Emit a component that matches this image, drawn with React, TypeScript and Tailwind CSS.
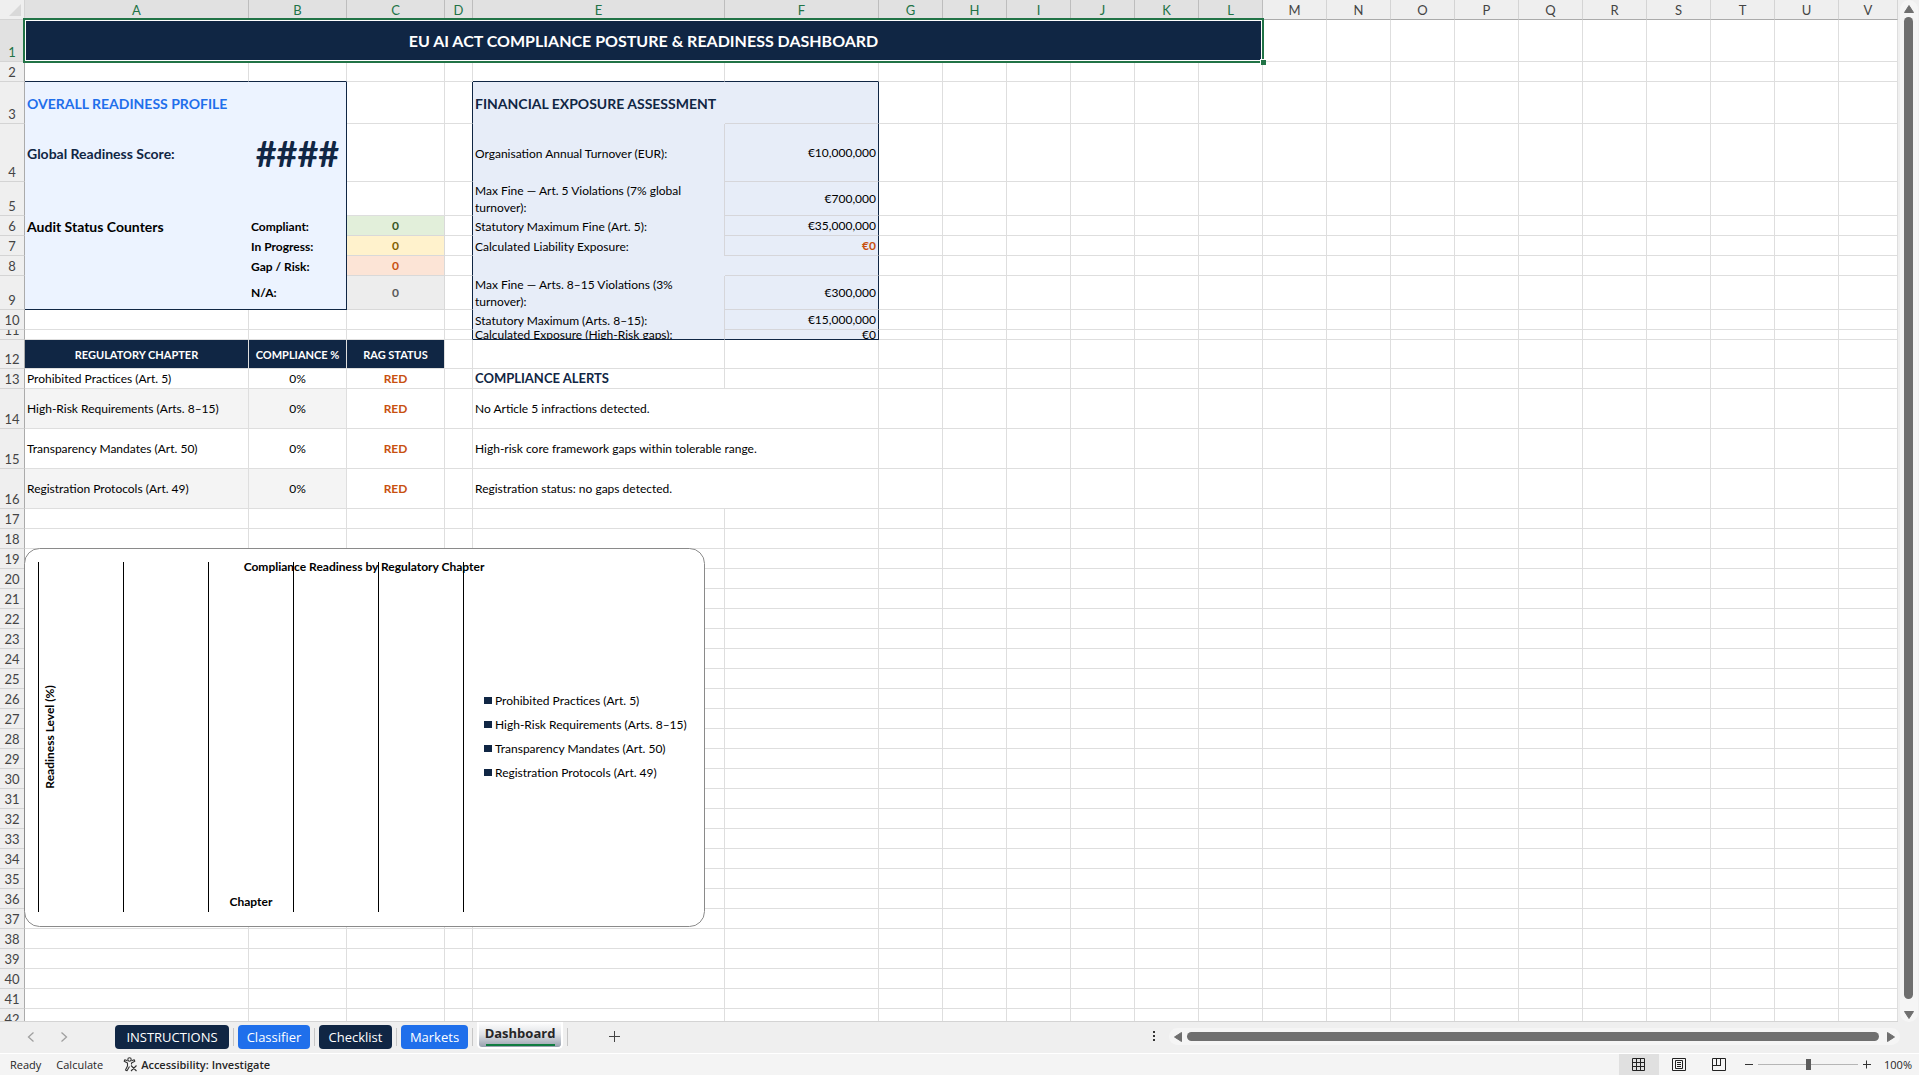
import React from "react";

type Cell = { text?: string; cls?: string; span?: number };
type Row = { h: string; cells: Record<string, Cell> };

const LETTERS = "ABCDEFGHIJKLMNOPQRSTUV".split("");
const LINE = "border-[#dedede]";
const PLAIN = `border-r border-b ${LINE}`;

const H10 = "h-[10px]";
const H20 = "h-[20px]";
const H29 = "h-[29px]";
const H34 = "h-[34px]";
const H40 = "h-[40px]";
const H42 = "h-[42px]";
const H58 = "h-[58px]";

const P1 = "bg-[#ecf3ff]";
const P2 = "bg-[#e7edf8] border-[#d6d6da]";
const P2L = "bg-[#e7edf8] border-r border-[#d6d6da]";
const P2V = "bg-[#e7edf8] border-b border-b-[#d6d6da] border-r border-r-[#102644] text-right";
const HEAD = "bg-[#102644] text-white text-[11px] font-bold text-center border-r border-b border-[#dedede]";
const COUNT = "text-center font-bold text-[12px] border-r border-b border-[#d9d9d9]";
const PANEL_RIGHT = "bg-[#ecf3ff] border-r border-r-[#102644]";
const RED = `text-center font-bold text-[#c8500f] ${PLAIN}`;
const ALT = `bg-[#f4f4f4] ${PLAIN}`;
const BEFORE_PANEL = "border-b border-b-[#dedede] border-r border-r-[#102644]";
const ABOVE_PANEL = "border-r border-r-[#dedede] border-b border-b-[#102644]";

const ROWS: Row[] = [
  {
    h: H42,
    cells: {
      A: {
        text: "EU AI ACT COMPLIANCE POSTURE & READINESS DASHBOARD",
        span: 12,
        cls: "bg-[#102644] text-white font-bold text-[16px] text-center border-r border-b border-[#217346]",
      },
    },
  },
  {
    h: H20,
    cells: {
      A: { cls: ABOVE_PANEL },
      B: { cls: ABOVE_PANEL },
      E: { cls: ABOVE_PANEL },
      F: { cls: ABOVE_PANEL },
    },
  },
  {
    h: H42,
    cells: {
      A: { text: "OVERALL READINESS PROFILE", span: 2, cls: `${PANEL_RIGHT} font-bold text-[14px] text-[#1f6feb]` },
      D: { cls: BEFORE_PANEL },
      E: { text: "FINANCIAL EXPOSURE ASSESSMENT", cls: `${P2} font-bold text-[14px] text-[#102644] whitespace-nowrap` },
      F: { cls: P2V },
    },
  },
  {
    h: H58,
    cells: {
      A: { text: "Global Readiness Score:", cls: `${P1} font-bold text-[14px] text-[#102644]` },
      B: { text: "####", cls: `${PANEL_RIGHT} font-bold text-[36px] text-[#102644] text-center` },
      D: { cls: BEFORE_PANEL },
      E: { text: "Organisation Annual Turnover (EUR):", cls: P2L },
      F: { text: "€10,000,000", cls: P2V },
    },
  },
  {
    h: H34,
    cells: {
      A: { cls: P1 },
      B: { cls: PANEL_RIGHT },
      D: { cls: BEFORE_PANEL },
      E: { text: "Max Fine — Art. 5 Violations (7% global turnover):", cls: P2L },
      F: { text: "€700,000", cls: P2V },
    },
  },
  {
    h: H20,
    cells: {
      A: { text: "Audit Status Counters", cls: `${P1} font-bold text-[14px]` },
      B: { text: "Compliant:", cls: `${PANEL_RIGHT} font-bold` },
      C: { text: "0", cls: `${COUNT} bg-[#e2efda] text-[#375623]` },
      D: { cls: BEFORE_PANEL },
      E: { text: "Statutory Maximum Fine (Art. 5):", cls: P2L },
      F: { text: "€35,000,000", cls: P2V },
    },
  },
  {
    h: H20,
    cells: {
      A: { cls: P1 },
      B: { text: "In Progress:", cls: `${PANEL_RIGHT} font-bold` },
      C: { text: "0", cls: `${COUNT} bg-[#fff2cc] text-[#7f6000]` },
      D: { cls: BEFORE_PANEL },
      E: { text: "Calculated Liability Exposure:", cls: P2L },
      F: { text: "€0", cls: `${P2V} font-bold text-[#c8500f]` },
    },
  },
  {
    h: H20,
    cells: {
      A: { cls: P1 },
      B: { text: "Gap / Risk:", cls: `${PANEL_RIGHT} font-bold` },
      C: { text: "0", cls: `${COUNT} bg-[#fce4d6] text-[#c8500f]` },
      D: { cls: BEFORE_PANEL },
      E: { cls: P2 },
      F: { cls: P2V },
    },
  },
  {
    h: H34,
    cells: {
      A: { cls: `${P1} border-b border-b-[#102644]` },
      B: { text: "N/A:", cls: `${PANEL_RIGHT} font-bold border-b border-b-[#102644]` },
      C: { text: "0", cls: `${COUNT} bg-[#ededed] text-[#595959]` },
      D: { cls: BEFORE_PANEL },
      E: { text: "Max Fine — Arts. 8–15 Violations (3% turnover):", cls: P2L },
      F: { text: "€300,000", cls: P2V },
    },
  },
  {
    h: H20,
    cells: {
      D: { cls: BEFORE_PANEL },
      E: { text: "Statutory Maximum (Arts. 8–15):", cls: P2L },
      F: { text: "€15,000,000", cls: P2V },
    },
  },
  {
    h: H10,
    cells: {
      D: { cls: BEFORE_PANEL },
      E: {
        text: "Calculated Exposure (High-Risk gaps):",
        cls: "bg-[#e7edf8] border-r border-r-[#d6d6da] border-b border-b-[#102644]",
      },
      F: { text: "€0", cls: "bg-[#e7edf8] text-right border-r border-b border-[#102644]" },
    },
  },
  {
    h: H29,
    cells: {
      A: { text: "REGULATORY CHAPTER", cls: HEAD },
      B: { text: "COMPLIANCE %", cls: HEAD },
      C: { text: "RAG STATUS", cls: HEAD },
    },
  },
  {
    h: H20,
    cells: {
      A: { text: "Prohibited Practices (Art. 5)" },
      B: { text: "0%", cls: `text-center ${PLAIN}` },
      C: { text: "RED", cls: RED },
      E: { text: "COMPLIANCE ALERTS", cls: `font-bold text-[13px] text-[#102644] ${PLAIN}` },
    },
  },
  {
    h: H40,
    cells: {
      A: { text: "High-Risk Requirements (Arts. 8–15)", cls: ALT },
      B: { text: "0%", cls: `text-center ${ALT}` },
      C: { text: "RED", cls: RED },
      E: { text: "No Article 5 infractions detected.", span: 2 },
    },
  },
  {
    h: H40,
    cells: {
      A: { text: "Transparency Mandates (Art. 50)" },
      B: { text: "0%", cls: `text-center ${PLAIN}` },
      C: { text: "RED", cls: RED },
      E: { text: "High-risk core framework gaps within tolerable range.", span: 2 },
    },
  },
  {
    h: H40,
    cells: {
      A: { text: "Registration Protocols (Art. 49)", cls: ALT },
      B: { text: "0%", cls: `text-center ${ALT}` },
      C: { text: "RED", cls: RED },
      E: { text: "Registration status: no gaps detected.", span: 2 },
    },
  },
  ...Array.from({ length: 26 }, () => ({ h: H20, cells: {} })),
];

function SheetRow({ row, n }: { row: Row; n: number }) {
  const out: React.ReactNode[] = [];
  for (let i = 0; i < LETTERS.length; ) {
    const c = row.cells[LETTERS[i]] ?? {};
    const span = c.span ?? 1;
    const small = row.h === H10;
    out.push(
      <td key={i} colSpan={span} className={`p-0 align-middle ${c.cls ?? PLAIN}`}>
        {c.text && (
          <div className={small ? "flex h-[9px] flex-col overflow-hidden px-[2px]" : "px-[2px]"}>
            {small ? <span className="-mt-1 whitespace-nowrap">{c.text}</span> : c.text}
          </div>
        )}
      </td>
    );
    i += span;
  }
  const active = n === 1;
  return (
    <tr className={row.h}>
      <th
        scope="row"
        className={`border-r border-b border-r-[#ababab] border-b-[#d4d4d4] p-0 align-bottom text-[13px] leading-[18px] font-normal ${
          active ? "bg-[#e1e1e1] text-[#217346]" : "bg-[#efefef] text-[#444444]"
        }`}
      >
        {row.h === H10 ? (
          <div className="flex h-[9px] flex-col justify-end overflow-hidden">
            <span>{n}</span>
          </div>
        ) : (
          n
        )}
      </th>
      {out}
    </tr>
  );
}

const LEGEND = [
  "Prohibited Practices (Art. 5)",
  "High-Risk Requirements (Arts. 8–15)",
  "Transparency Mandates (Art. 50)",
  "Registration Protocols (Art. 49)",
];

function Chart() {
  return (
    <svg
      className="absolute top-[548px] left-6"
      width="681"
      height="379"
      viewBox="0 0 681 379"
      role="img"
      aria-label="Compliance Readiness by Regulatory Chapter"
    >
      <rect x="0.5" y="0.5" width="680" height="378" rx="15" fill="#fff" stroke="#8a8a8a" />
      <g fontSize="12" fill="#000">
        <text x="340" y="23" textAnchor="middle" fontWeight="700">
          Compliance Readiness by Regulatory Chapter
        </text>
        <text x="227" y="358" textAnchor="middle" fontWeight="700">
          Chapter
        </text>
        <text transform="translate(30 189) rotate(-90)" textAnchor="middle" fontWeight="700">
          Readiness Level (%)
        </text>
        {LEGEND.map((t, i) => (
          <g key={t}>
            <rect x="460" y={149 + i * 24} width="8" height="7" fill="#102644" />
            <text x="471" y={157 + i * 24}>
              {t}
            </text>
          </g>
        ))}
      </g>
      {[0, 1, 2, 3, 4, 5].map((i) => (
        <rect key={i} x={14 + i * 85} y="14" width="1" height="350" fill="#000" />
      ))}
    </svg>
  );
}

function Sheet() {
  return (
    <div className="relative min-w-0 flex-1 overflow-hidden border-b border-[#d4d4d4] bg-white font-['Lato',sans-serif] text-[12px] leading-[17px] text-black">
      <table className="w-full table-fixed border-separate border-spacing-0">
        <colgroup>
          <col className="w-[25px]" />
          <col className="w-[224px]" />
          <col className="w-[98px]" />
          <col className="w-[98px]" />
          <col className="w-[28px]" />
          <col className="w-[252px]" />
          <col className="w-[154px]" />
          {LETTERS.slice(6, 21).map((l) => (
            <col key={l} className="w-[64px]" />
          ))}
          <col />
        </colgroup>
        <thead>
          <tr className="h-[20px]">
            <th className="border-r border-b border-[#d4d4d4] bg-[#efefef] p-0">
              <svg className="ml-2 block" width="14" height="12" aria-hidden="true">
                <path d="M13 0V12H1Z" fill="#d9d9d9" />
              </svg>
            </th>
            {LETTERS.map((l, i) => (
              <th
                key={l}
                scope="col"
                className={`border-r border-b p-0 pt-px text-[13px] leading-[18px] font-normal ${
                  i < 12
                    ? "border-r-[#bdbdbd] border-b-[#217346] bg-[#e1e1e1] text-[#217346]"
                    : "border-r-[#d4d4d4] border-b-[#ababab] bg-[#efefef] text-[#444444]"
                }`}
              >
                {l}
              </th>
            ))}
          </tr>
        </thead>
        <tbody>
          {ROWS.map((r, i) => (
            <SheetRow key={i} row={r} n={i + 1} />
          ))}
        </tbody>
      </table>
      <div className="pointer-events-none absolute top-[18px] left-[23px] h-[45px] w-[1241px] border-2 border-[#217346]">
        <div className="h-full border border-white" />
        <div className="absolute -right-[4px] -bottom-[4px] h-[6px] w-[6px] border-t border-l border-white bg-[#217346]" />
      </div>
      <Chart />
    </div>
  );
}

function VerticalScroll() {
  return (
    <div className="flex w-[21px] shrink-0 justify-center">
      <div className="flex w-[18px] flex-col items-center rounded-full bg-[#f5f5f5] pt-[5px] pb-[3px]">
        <svg width="10" height="8" aria-hidden="true">
          <path d="M5 0.5L9.5 7.5H0.5Z" fill="#6f6f6f" stroke="#6f6f6f" strokeLinejoin="round" />
        </svg>
        <div className="mt-1 mb-3 w-[9px] flex-1 rounded-full bg-[#6f6f6f]" />
        <svg width="10" height="8" aria-hidden="true">
          <path d="M5 7.5L9.5 0.5H0.5Z" fill="#6f6f6f" stroke="#6f6f6f" strokeLinejoin="round" />
        </svg>
      </div>
    </div>
  );
}

const TABS = [
  { name: "INSTRUCTIONS", cls: "bg-[#102644] w-[114px]" },
  { name: "Classifier", cls: "bg-[#1f6feb] w-[72px]" },
  { name: "Checklist", cls: "bg-[#102644] w-[73px]" },
  { name: "Markets", cls: "bg-[#1f6feb] w-[67px]" },
];

function TabBar() {
  return (
    <div className="flex h-[31px] shrink-0 items-center bg-[#efefef] pb-[2px]">
      <div className="flex w-[115px] items-center gap-[25px] pl-[27px] text-[#a0a0a0]">
        <button aria-label="Previous sheet">
          <svg width="8" height="12" fill="none" stroke="currentColor" strokeWidth="1.3" aria-hidden="true">
            <path d="M6.5 1.5L1.5 6L6.5 10.5" />
          </svg>
        </button>
        <button aria-label="Next sheet">
          <svg width="8" height="12" fill="none" stroke="currentColor" strokeWidth="1.3" aria-hidden="true">
            <path d="M1.5 1.5L6.5 6L1.5 10.5" />
          </svg>
        </button>
      </div>
      {TABS.map((t) => (
        <React.Fragment key={t.name}>
          <button className={`h-6 rounded-[4px] text-center font-['Open_Sans',sans-serif] text-[13px] leading-6 text-white ${t.cls}`}>
            {t.name}
          </button>
          <span className="mx-1 h-[18px] w-px bg-[#c6c6c6]" />
        </React.Fragment>
      ))}
      <button className="flex h-[27px] w-[86px] flex-col items-center self-start rounded-b-[5px] border-x-2 border-b-2 border-white bg-linear-to-b from-white via-[#dfe1e5] to-[#97a0ae] pt-px font-['Open_Sans',sans-serif] text-[13px] leading-[21px] font-bold text-[#262626]">
        Dashboard
        <span className="h-[2px] w-[69px] bg-[#107c41]" />
      </button>
      <span className="mx-1 h-[18px] w-px bg-[#c6c6c6]" />
      <button aria-label="New sheet" className="ml-9">
        <svg width="13" height="13" stroke="#444" aria-hidden="true">
          <path d="M6.5 1V12M1 6.5H12" />
        </svg>
      </button>
      <div className="ml-auto flex w-[766px] items-center">
        <svg width="3" height="11" fill="#333" aria-hidden="true">
          <path d="M0 0h2v2H0zM0 4h2v2H0zM0 8h2v2H0z" />
        </svg>
        <div className="ml-[13px] mr-[19px] flex h-[17px] flex-1 items-center rounded-full bg-[#f5f5f5] px-[5px]">
          <svg width="8" height="10" aria-hidden="true">
            <path d="M0.5 5L7.5 0.5V9.5Z" fill="#6f6f6f" stroke="#6f6f6f" strokeLinejoin="round" />
          </svg>
          <div className="mr-2 ml-[5px] h-[9px] flex-1 rounded-full bg-[#6f6f6f]" />
          <svg width="8" height="10" aria-hidden="true">
            <path d="M7.5 5L0.5 0.5V9.5Z" fill="#6f6f6f" stroke="#6f6f6f" strokeLinejoin="round" />
          </svg>
        </div>
      </div>
    </div>
  );
}

function StatusBar() {
  return (
    <div className="flex h-[22px] shrink-0 items-center border-t border-white bg-[#f4f4f4] pl-[10px] font-['Open_Sans',sans-serif] text-[11px] leading-[21px] text-[#262626]">
      <span>Ready</span>
      <span className="ml-[15px]">Calculate</span>
      <button className="ml-5 flex items-center gap-[3px] font-semibold">
        <svg width="15" height="15" viewBox="0 0 15 15" fill="none" stroke="#333" strokeWidth="1.1" strokeLinejoin="round" aria-hidden="true">
          <circle cx="6.5" cy="2.5" r="1.7" />
          <path d="M4.500 3.800L1.800 2.800L1.200 4.300L4.500 5.900V9L2.500 13L4 13.700L6.500 9.500M8.500 3.800L11.200 2.800L11.800 4.300L8.500 5.900V7.500M8 8.500L13.500 14M13.500 8.500L8 14" />
        </svg>
        Accessibility: Investigate
      </button>
      <div className="ml-auto flex items-center">
        <button aria-label="Normal view" className="flex h-[21px] w-10 items-center justify-center bg-[#e0e0e0]">
          <svg width="14" height="14" fill="none" stroke="#222" aria-hidden="true">
            <path d="M.5 .5h12v12H.5zM4.5 .5v12M8.5 .5v12M.5 4.5h12M.5 8.5h12" />
          </svg>
        </button>
        <button aria-label="Page layout" className="flex h-[21px] w-10 items-center justify-center">
          <svg width="14" height="14" fill="none" stroke="#222" aria-hidden="true">
            <path d="M.5 .5h13v12H.5zM3.5 2.5h7v8h-7zM5 4.5h4M5 6.500h4M5 8.5h4" />
          </svg>
        </button>
        <button aria-label="Page break preview" className="flex h-[21px] w-10 items-center justify-center">
          <svg width="14" height="14" fill="none" stroke="#222" aria-hidden="true">
            <path d="M.5 .5h13v12H.5zM.5 7.5h8M8.5 8V.5M4.5 7.5V.5" />
          </svg>
        </button>
        <button aria-label="Zoom out" className="ml-[5px]">
          <svg width="10" height="10" stroke="#333" aria-hidden="true">
            <path d="M1 4.5H9" />
          </svg>
        </button>
        <input
          type="range"
          aria-label="Zoom"
          min={0}
          max={100}
          defaultValue={50}
          className="mx-1 h-[12px] w-[100px] appearance-none bg-linear-to-b from-transparent from-[5px] via-[#777] via-[5px] to-transparent to-[6px] [&::-webkit-slider-thumb]:h-[11px] [&::-webkit-slider-thumb]:w-[5px] [&::-webkit-slider-thumb]:appearance-none [&::-webkit-slider-thumb]:bg-[#5c5c5c]"
        />
        <button aria-label="Zoom in">
          <svg width="10" height="10" stroke="#333" aria-hidden="true">
            <path d="M1 4.5H9M4.5 .5V8.5" />
          </svg>
        </button>
        <button className="w-[47px] pr-[7px] text-right">100%</button>
      </div>
    </div>
  );
}

export default function App() {
  return (
    <div className="flex h-screen flex-col overflow-hidden bg-[#efefef]">
      <div className="flex min-h-0 flex-1">
        <Sheet />
        <VerticalScroll />
      </div>
      <TabBar />
      <StatusBar />
    </div>
  );
}
